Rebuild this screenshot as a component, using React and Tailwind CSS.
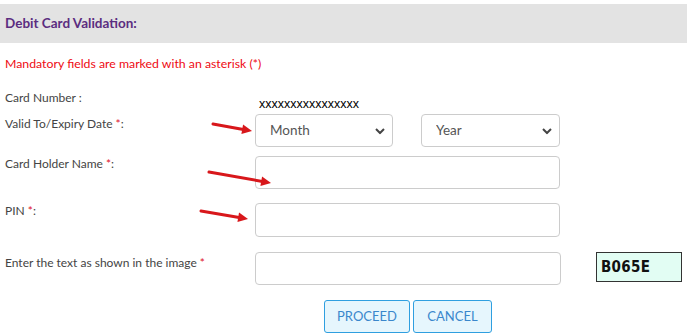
import React from 'react';

const Chevron = () => (
  <svg className="pointer-events-none absolute right-[8px] top-1/2 -translate-y-1/2" width="10" height="7" viewBox="0 0 10 7">
    <path d="M1 1.5 L5 5.5 L9 1.5" fill="none" stroke="#444" strokeWidth="2" />
  </svg>
);

const Arrow = ({ x1, y1, x2, y2 }) => {
  const a = Math.atan2(y2 - y1, x2 - x1);
  const len = 11;
  const w = 0.45;
  const p1 = [x2 - len * Math.cos(a - w), y2 - len * Math.sin(a - w)];
  const p2 = [x2 - len * Math.cos(a + w), y2 - len * Math.sin(a + w)];
  return (
    <g>
      <line x1={x1} y1={y1} x2={x2 - 6 * Math.cos(a)} y2={y2 - 6 * Math.sin(a)} stroke="#d8171b" strokeWidth="3" strokeLinecap="round" />
      <polygon points={`${x2},${y2} ${p1[0]},${p1[1]} ${p2[0]},${p2[1]}`} fill="#d8171b" />
    </g>
  );
};

const Label = ({ children, star, colon = true, className = '' }) => (
  <div className={`text-[12px] leading-[16px] text-[#444] ${className}`}>
    {children}
    {star && <span className="text-[#e0102a]"> *</span>}
    {colon && ':'}
  </div>
);

export default function App() {
  return (
    <div className="relative w-[687px] h-[335px] bg-white overflow-hidden font-['Lato','Liberation_Sans',sans-serif]">
      <div className="mt-[4px] h-[39px] bg-[#e3e3e3] px-[5px] flex items-center">
        <h2 className="text-[13.5px] font-bold text-[#5b2d80]">Debit Card Validation:</h2>
      </div>

      <p className="mt-[13px] px-[5px] text-[12.3px] leading-[16px] text-[#ee0a12]">
        Mandatory fields are marked with an asterisk (*)
      </p>

      <div className="mt-[18px] grid grid-cols-[250px_1fr] pl-[5px]">
        <Label colon={false}>Card Number :</Label>
        <div className="pt-[7px] pl-[4px] text-[12.5px] leading-[14px] text-black font-['Liberation_Sans',sans-serif]">xxxxxxxxxxxxxxxx</div>

        <Label star className="pt-[5px]">Valid To/Expiry Date</Label>
        <div className="mt-[3px] flex gap-[28px]">
          <div className="relative w-[138px]">
            <select className="appearance-none w-full h-[33px] rounded-[4px] border border-[#ccc] bg-white pl-[14px] text-[13.5px] text-[#555]">
              <option>Month</option>
            </select>
            <Chevron />
          </div>
          <div className="relative w-[139px]">
            <select className="appearance-none w-full h-[33px] rounded-[4px] border border-[#ccc] bg-white pl-[14px] text-[13.5px] text-[#555]">
              <option>Year</option>
            </select>
            <Chevron />
          </div>
        </div>

        <Label star className="mt-[8px] pt-[1px]">Card Holder Name</Label>
        <input className="mt-[9px] w-[305px] h-[33px] rounded-[4px] border border-[#ccc] bg-white" />

        <Label star className="mt-[14px]">PIN</Label>
        <input className="mt-[14px] w-[305px] h-[34px] rounded-[4px] border border-[#ccc] bg-white" />

        <Label star colon={false} className="mt-[15px] pt-[3px]">Enter the text as shown in the image</Label>
        <div className="mt-[15px] flex items-start gap-[35px]">
          <input className="w-[306px] h-[33px] rounded-[4px] border border-[#ccc] bg-white" />
          <div className="w-[86px] h-[30px] border border-[#333] bg-[#e2fdf3] flex items-center pl-[4px] text-[15px] font-bold tracking-[0.3px] text-[#111] font-['DejaVu_Sans_Condensed','DejaVu_Sans',sans-serif]">
            B065E
          </div>
        </div>
      </div>

      <div className="mt-[15px] flex pl-[324px] gap-[3px]">
        <button className="w-[86px] h-[33px] rounded-[3px] border border-[#2f9fe0] bg-[#e6f6fd] text-[13px] text-[#3a87cc]">PROCEED</button>
        <button className="w-[79px] h-[33px] rounded-[3px] border border-[#2f9fe0] bg-[#e6f6fd] text-[13px] text-[#3a87cc]">CANCEL</button>
      </div>

      <svg className="pointer-events-none absolute left-0 top-0" width="687" height="335">
        <Arrow x1={213} y1={124} x2={252} y2={131} />
        <Arrow x1={209} y1={172} x2={271} y2={183} />
        <Arrow x1={201} y1={211} x2={248} y2={219} />
      </svg>
    </div>
  );
}
